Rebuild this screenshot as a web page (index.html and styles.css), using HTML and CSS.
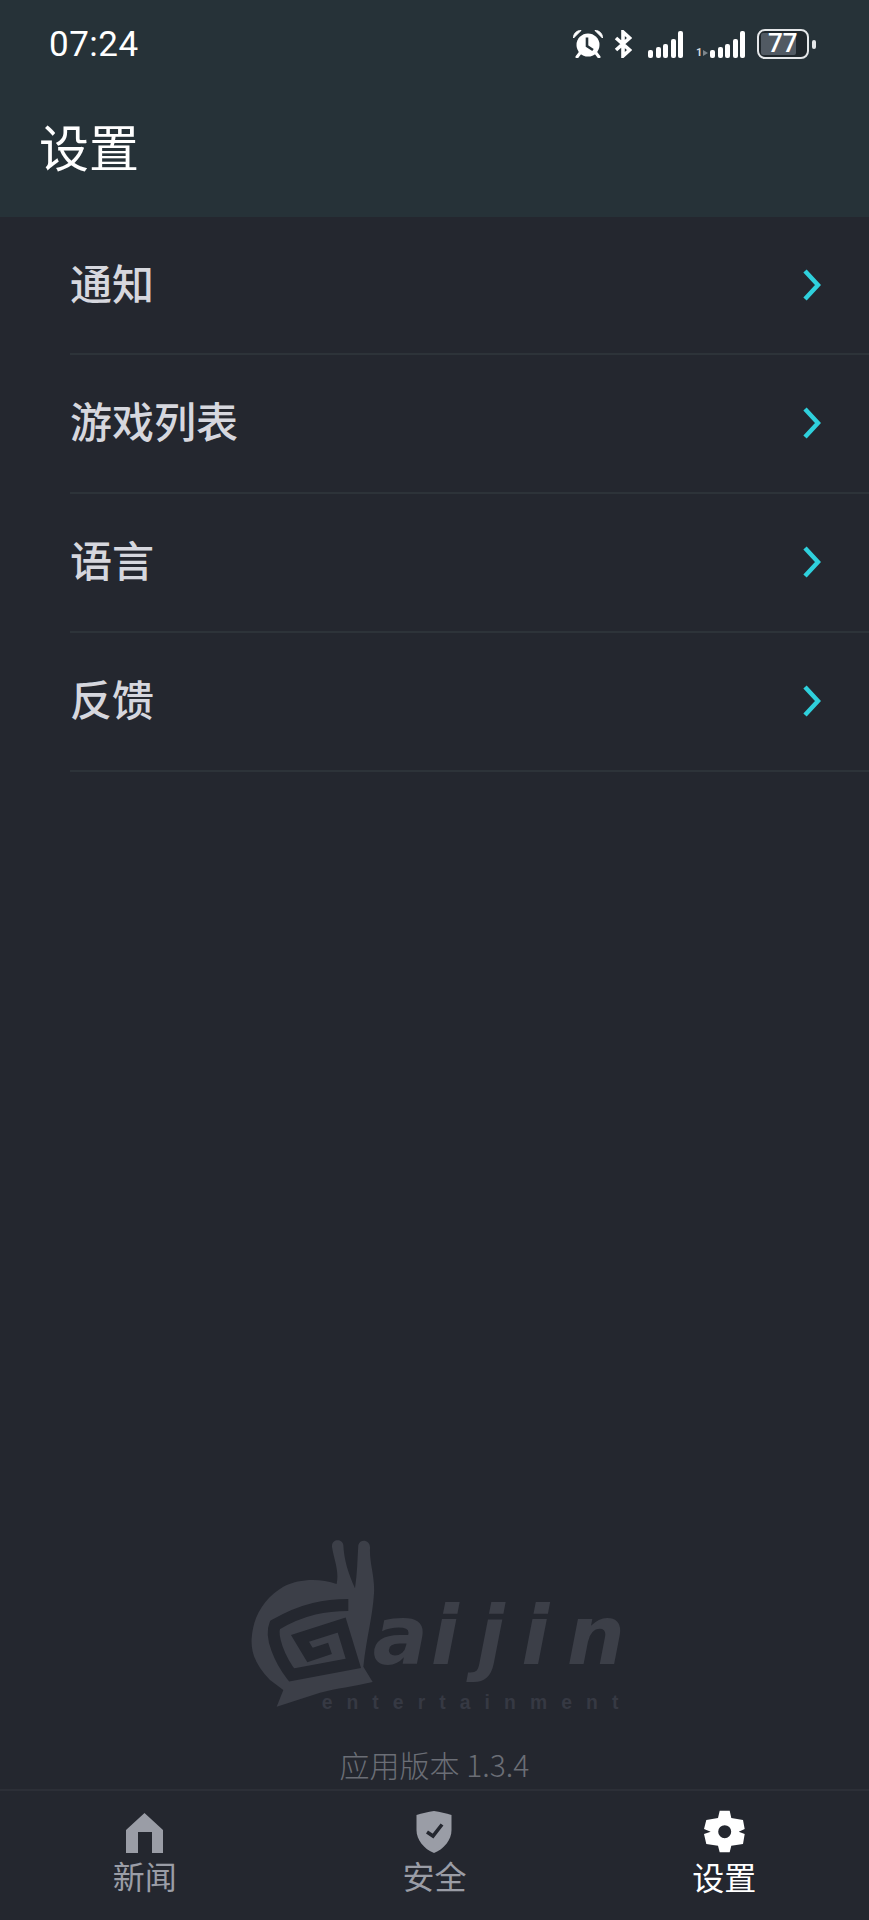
FILE: index.html
```html
<!DOCTYPE html>
<html lang="zh-CN">
<head>
  <meta charset="UTF-8" />
  <meta name="viewport" content="width=device-width, initial-scale=1.0" />
  <title>设置</title>
  <link rel="stylesheet" href="styles.css">
</head>
<body>

<div class="app">
  <header class="header">
    <div class="statusbar">
      <span class="time">07:24</span>
      <div class="status-icons">
        <!-- alarm -->
        <svg width="30" height="28" viewBox="0 0 30 28">
          <circle cx="15" cy="15" r="11.500" fill="#fff"/>
          <path d="M14 7.500V16L20 20" fill="none" stroke="#263238" stroke-width="2.600"/>
          <path d="M0.500 8C0.500 3.500 3.500 0.500 8 0.500ZM29.500 8C29.500 3.500 26.500 0.500 22 0.500Z" fill="#fff" stroke="#fff" stroke-linejoin="round"/>
          <path d="M7 23 4 27M23 23 26 27" fill="none" stroke="#fff" stroke-width="3" stroke-linecap="round"/>
        </svg>
        <!-- bluetooth -->
        <svg class="ic-bt" width="18" height="28" viewBox="0 0 18 28">
          <path d="M2 8 15.500 20 9 26V2L15.500 8 2 20" fill="none" stroke="#fff" stroke-width="3.600"/>
        </svg>
        <div class="bars">
          <i class="b1"></i><i class="b2"></i><i class="b3"></i><i class="b4"></i><i class="b5"></i>
        </div>
        <div class="sim2">
          <span class="sim-num">1</span>
          <span class="sim-arrow"></span>
          <div class="bars">
            <i class="b1"></i><i class="b2"></i><i class="b3"></i><i class="b4"></i><i class="b5"></i>
          </div>
        </div>
        <div class="battery">
          <div class="battery-body">
            <div class="battery-fill" style="width: 80%"></div>
            <span class="battery-num">77</span>
          </div>
          <div class="battery-tip"></div>
        </div>
      </div>
    </div>
    <h1 class="title">设置</h1>
  </header>

  <main class="main">
    <ul class="menu">
      <li class="menu-row"><span>通知</span>
        <svg width="18" height="32" viewBox="0 0 18 32"><path d="M2 2 15 16 2 30" fill="none" stroke="#2fd0dc" stroke-width="4.500"/></svg></li>
      <li class="menu-row"><span>游戏列表</span>
        <svg width="18" height="32" viewBox="0 0 18 32"><path d="M2 2 15 16 2 30" fill="none" stroke="#2fd0dc" stroke-width="4.500"/></svg></li>
      <li class="menu-row"><span>语言</span>
        <svg width="18" height="32" viewBox="0 0 18 32"><path d="M2 2 15 16 2 30" fill="none" stroke="#2fd0dc" stroke-width="4.500"/></svg></li>
      <li class="menu-row"><span>反馈</span>
        <svg width="18" height="32" viewBox="0 0 18 32"><path d="M2 2 15 16 2 30" fill="none" stroke="#2fd0dc" stroke-width="4.500"/></svg></li>
    </ul>

    <div class="about">
      <!-- snail logo, coordinates taken at 3x -->
      <svg class="logo" width="420" height="215" viewBox="0 0 1260 645">
        <path class="logo-shape" d="M170 590 190 540 150 510C110 470 92 430 95 385 100 310 140 260 190 230 240 205 300 205 350 222 358 180 342 150 336 110 334 85 368 85 370 105 372 150 385 190 405 235 412 190 412 150 415 105 420 85 452 88 450 115 448 160 465 200 462 250 458 320 440 380 430 470L458 516C400 530 350 535 300 548Z"/>
        <path class="logo-cut" d="M385 285C320 285 250 295 165 345 150 380 180 450 215 495L400 460 365 345 240 385 270 435 330 415"/>
        <text class="logo-name" x="458 632 770 904 1040" y="462">aijin</text>
        <text class="logo-sub" x="305" y="596" textLength="890" lengthAdjust="spacing">entertainment</text>
      </svg>
      <p class="version">应用版本 1.3.4</p>
    </div>
  </main>

  <nav class="tabs">
    <div class="tab">
      <div class="tab-icon">
        <svg width="37" height="40" viewBox="0 0 37 40">
          <path d="M18.500 0 37 17V40H26V19H12V40H0V17Z" fill="#9a9da6"/>
        </svg>
      </div>
      <span>新闻</span>
    </div>
    <div class="tab">
      <div class="tab-icon">
        <svg width="36" height="42" viewBox="0 0 36 42">
          <path d="M18 0C24 1 30 2 35.500 4V19C35.500 29 28 38 18 42 8 38 0.500 29 0.500 19V4C6 2 12 1 18 0Z" fill="#9a9da6"/>
          <path d="M11 21 17 25 26 13.500" fill="none" stroke="#24272f" stroke-width="3.600"/>
        </svg>
      </div>
      <span>安全</span>
    </div>
    <div class="tab tab-active">
      <div class="tab-icon">
        <svg width="41" height="43" viewBox="0 0 41 43">
          <path fill="#fff" fill-rule="evenodd" d="M15.700 .7H25.700L27.300 8 39 10 40.700 19 34.700 21.700 40.700 24 39 34 27.300 35.700 25.700 42.300H15.700L14 35.700 2.300 34 0 24 6.700 21.700 0 19 2.300 10 14 8ZM20.700 15.200a6.500 6.500 0 1 0 0 13 6.500 6.500 0 0 0 0-13Z"/>
        </svg>
      </div>
      <span>设置</span>
    </div>
  </nav>
</div>

</body>
</html>
```

FILE: styles.css
```css
* {
  box-sizing: border-box;
}
body {
  margin: 0;
  background-color: #24272f;
  font-family: 'Noto Sans CJK SC', 'Noto Sans', sans-serif;
}
.app {
  display: flex;
  flex-direction: column;
  height: 1920px;
}

/* header */
.header {
  height: 217px;
  background-color: #263238;
  color: #fff;
}
.statusbar {
  display: flex;
  justify-content: space-between;
  align-items: center;
  height: 59px;
  padding: 29px 53px 0 49px;
}
.time {
  margin-top: 2px;
  font-family: Roboto, sans-serif;
  font-size: 35px;
  letter-spacing: 0.5px;
  line-height: 30px;
}
.status-icons {
  display: flex;
  align-items: center;
}
.ic-bt {
  margin-left: 11px;
}
.bars {
  display: flex;
  align-items: flex-end;
  gap: 2.500px;
  height: 28px;
  margin-left: 16px;
}
.bars i {
  display: block;
  width: 5px;
  border-radius: 2px;
  background-color: #fff;
}
.b1 { height: 8px; }
.b2 { height: 11px; }
.b3 { height: 14px; }
.b4 { height: 19px; }
.b5 { height: 27px; }
.sim2 {
  display: flex;
  align-items: flex-end;
  margin-left: 13px;
}
.sim2 .bars {
  margin-left: 2px;
}
.sim-num {
  width: 7px;
  font-family: Roboto, sans-serif;
  font-size: 11px;
  font-weight: 700;
  line-height: 11px;
  color: #d5d8da;
}
.sim-arrow {
  width: 0;
  height: 0;
  margin-bottom: 2px;
  border-left: 5px solid #7d868c;
  border-top: 3px solid transparent;
  border-bottom: 3px solid transparent;
}
.battery {
  display: flex;
  align-items: center;
  margin-left: 12px;
}
.battery-body {
  position: relative;
  width: 52px;
  height: 30px;
  padding: 2px;
  border: 2.500px solid #e4e7e9;
  border-radius: 8px;
  overflow: hidden;
  background-color: #1f272c;
}
.battery-fill {
  height: 100%;
  border-radius: 2px;
  background-color: #515a63;
}
.battery-num {
  position: absolute;
  top: 0;
  left: 9px;
  font-family: Roboto, sans-serif;
  font-size: 26px;
  font-weight: 500;
  line-height: 25px;
}
.battery-tip {
  width: 4px;
  height: 9px;
  margin-left: 3px;
  border-radius: 2px;
  background-color: #e4e7e9;
}
.title {
  margin: 53px 0 0 39px;
  font-size: 50px;
  font-weight: 400;
  line-height: 66px;
}

/* list */
.main {
  flex: 1;
  display: flex;
  flex-direction: column;
  justify-content: space-between;
}
.menu {
  list-style: none;
  margin: 0;
  padding: 0 0 0 70px;
}
.menu-row {
  display: flex;
  justify-content: space-between;
  align-items: center;
  height: 139px;
  padding: 0 48px 8px 0;
  border-bottom: 2px solid #2d3339;
  color: #d6d7de;
  font-size: 42px;
  font-weight: 500;
}
.menu-row:first-child {
  height: 138px;
}
.menu-row svg {
  margin-top: 7px;
}

/* logo + version */
.about {
  display: flex;
  flex-direction: column;
  align-items: center;
}
.logo {
  display: block;
  margin-left: -9px;
}
.logo-shape {
  fill: #3c3f48;
}
.logo-cut {
  fill: none;
  stroke: #24272f;
  stroke-width: 36;
}
.logo-name {
  fill: #3c3f48;
  font-family: 'DejaVu Sans', sans-serif;
  font-size: 245px;
  font-style: italic;
  font-weight: 700;
}
.logo-sub {
  fill: #363943;
  font-family: 'Liberation Sans', sans-serif;
  font-size: 58px;
  font-weight: 700;
}
.version {
  margin: 17px 0 3px;
  color: #6b6e76;
  font-size: 30px;
  line-height: 44px;
  font-weight: 300;
}

/* bottom tabs */
.tabs {
  display: grid;
  grid-template-columns: 1fr 1fr 1fr;
  height: 131px;
  padding-top: 18px;
  border-top: 2px solid #2c2f37;
}
.tab {
  display: flex;
  flex-direction: column;
  align-items: center;
  color: #9a9da6;
  font-size: 32px;
  line-height: 44px;
}
.tab-icon {
  display: flex;
  align-items: flex-end;
  height: 44px;
}
.tab-icon svg {
  display: block;
}
.tab-active {
  color: #fff;
}
.tab-active span {
  margin-top: 1px;
}
```
